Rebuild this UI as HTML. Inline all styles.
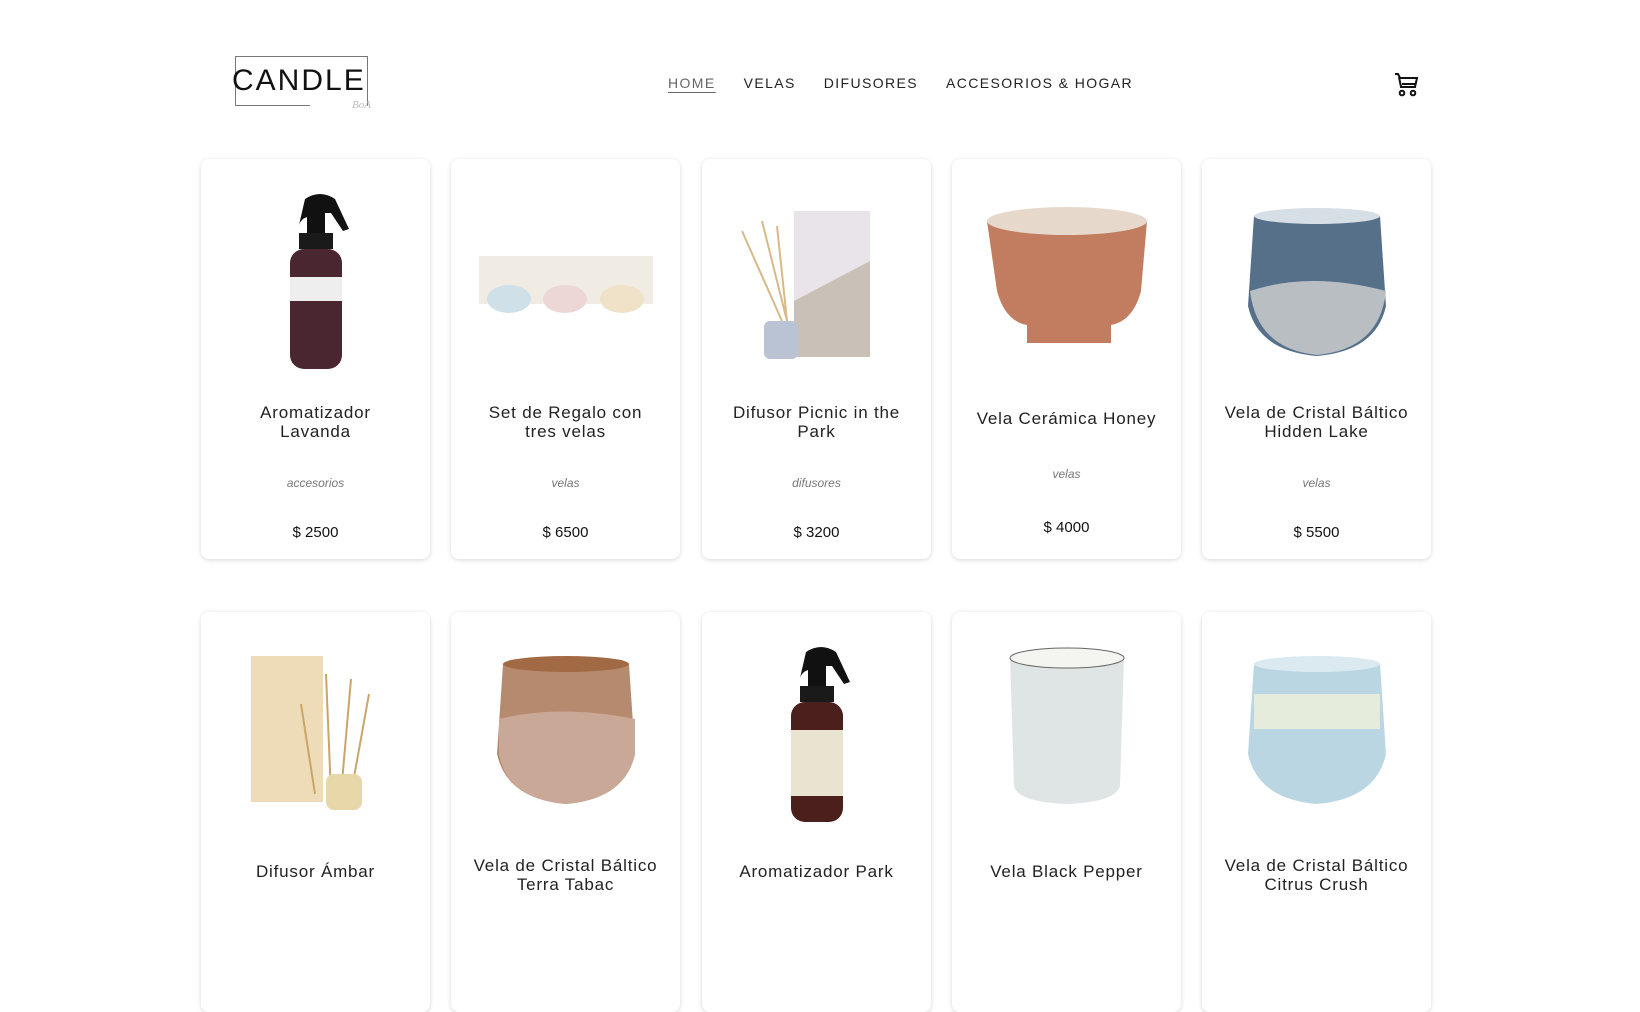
<!DOCTYPE html>
<html><head><meta charset="utf-8"><style>
*{margin:0;padding:0;box-sizing:border-box}
body{width:1640px;height:907px;overflow:hidden;background:#fff;font-family:"Liberation Sans",sans-serif;color:#222;position:relative}
.logo{position:absolute;left:235px;top:56px;width:133px;height:50px;border:1.5px solid #777;border-bottom:none}
.logo:after{content:"";position:absolute;left:-1.5px;bottom:0;width:75px;border-bottom:1.5px solid #777}
.logo b{position:absolute;left:-4px;top:7px;font-weight:normal;font-size:30px;letter-spacing:2px;color:#111;line-height:34px}
.logo i{position:absolute;left:116px;top:42px;font-size:11px;color:#bbb;font-family:"Liberation Serif",serif}
nav{position:absolute;top:75px;left:668px;font-size:14px;letter-spacing:1.4px;color:#222}
nav span{margin-right:28px}
nav span:first-child{color:#666;text-decoration:underline;text-underline-offset:4px}
.cart{position:absolute;left:1394px;top:72px}
.card{position:absolute;width:229px;height:400px;background:#fff;border-radius:8px;box-shadow:0 1px 5px rgba(0,0,0,.16)}
.card svg{position:absolute;left:0;top:22px}
.t{position:absolute;top:244px;left:0;right:0;text-align:center;font-size:17px;letter-spacing:.8px;line-height:19px;color:#222;white-space:nowrap}
.t.one{top:250px}
.c{position:absolute;top:317px;width:100%;text-align:center;font-size:12px;font-style:italic;color:#777}
.p{position:absolute;top:365px;width:100%;text-align:center;font-size:15px;color:#111}
</style></head><body>
<div class="logo"><b>CANDLE</b><i>BoA</i></div>
<nav><span>HOME</span><span>VELAS</span><span>DIFUSORES</span><span>ACCESORIOS &amp; HOGAR</span></nav>
<svg class="cart" width="26" height="26" viewBox="0 0 26 26" fill="none" stroke="#111" stroke-width="2"><path d="M1 2h3l2 4h17l-2 9H7L5 5M8 12h14"/><circle cx="8" cy="21" r="2.3"/><circle cx="19" cy="21" r="2.3"/></svg>

<div class="card" style="left:201px;top:159px"><svg width="229" height="200"><path d="M104 18q15-10 30 0l14 30-6 2-12-18h-6v20h-18v-16q-6 2-8 8z" fill="#111"/><rect x="98" y="52" width="34" height="16" fill="#1a1a1a"/><rect x="89" y="68" width="52" height="120" rx="14" fill="#4a2730"/><rect x="89" y="96" width="52" height="24" fill="#eee"/></svg><div class="t">Aromatizador<br>Lavanda</div><div class="c">accesorios</div><div class="p">$ 2500</div></div>
<div class="card" style="left:451px;top:159px"><svg width="229" height="200"><rect x="28" y="75" width="174" height="48" fill="#f0ece4"/><ellipse cx="58" cy="118" rx="22" ry="14" fill="#cfe0e8"/><ellipse cx="114" cy="118" rx="22" ry="14" fill="#ecd6d6"/><ellipse cx="171" cy="118" rx="22" ry="14" fill="#efe2c8"/></svg><div class="t">Set de Regalo con<br>tres velas</div><div class="c">velas</div><div class="p">$ 6500</div></div>
<div class="card" style="left:702px;top:159px"><svg width="229" height="200"><rect x="92" y="30" width="76" height="146" fill="#e9e4ea"/><path d="M92 120l76-40v96H92z" fill="#c9c0b8"/><path d="M40 50l40 90M60 40l25 100M75 45l10 95" stroke="#d8b98a" stroke-width="2"/><rect x="62" y="140" width="34" height="38" rx="6" fill="#b9c3d4"/></svg><div class="t">Difusor Picnic in the<br>Park</div><div class="c">difusores</div><div class="p">$ 3200</div></div>
<div class="card" style="left:952px;top:159px"><svg width="229" height="200"><path d="M35 40h160l-6 70q-8 30-30 34v18h-84v-18q-22-4-30-34z" fill="#c27c60"/><ellipse cx="115" cy="40" rx="80" ry="14" fill="#e6d9cc"/></svg><div class="t one">Vela Cerámica Honey</div><div class="c" style="top:308px">velas</div><div class="p" style="top:360px">$ 4000</div></div>
<div class="card" style="left:1202px;top:159px"><svg width="229" height="200"><path d="M52 35h126l6 90q-10 45-69 50q-59-5-69-50z" fill="#57708a"/><path d="M48 110q60-20 136 0q-6 58-69 64q-60-6-67-64z" fill="#b8bec2"/><ellipse cx="115" cy="35" rx="63" ry="8" fill="#d6dee6"/></svg><div class="t">Vela de Cristal Báltico<br>Hidden Lake</div><div class="c">velas</div><div class="p">$ 5500</div></div>

<div class="card" style="left:201px;top:612px"><svg width="229" height="200"><rect x="50" y="22" width="72" height="146" fill="#eedcb8"/><path d="M100 70l14 90M125 40l5 120M150 45l-10 115M168 60l-18 100" stroke="#c9a56a" stroke-width="2"/><rect x="125" y="140" width="36" height="36" rx="8" fill="#e8d7a8"/></svg><div class="t one">Difusor Ámbar</div></div>
<div class="card" style="left:451px;top:612px"><svg width="229" height="200"><path d="M52 30h126l6 90q-10 45-69 50q-59-5-69-50z" fill="#b68a6e"/><path d="M48 85q60-15 136 0l0 35q-10 45-69 50q-59-5-67-50z" fill="#c9a898"/><ellipse cx="115" cy="30" rx="63" ry="8" fill="#a26a44"/></svg><div class="t">Vela de Cristal Báltico<br>Terra Tabac</div></div>
<div class="card" style="left:702px;top:612px"><svg width="229" height="200"><path d="M104 18q15-10 30 0l14 30-6 2-12-18h-6v20h-18v-16q-6 2-8 8z" fill="#111"/><rect x="98" y="52" width="34" height="16" fill="#1a1a1a"/><rect x="89" y="68" width="52" height="120" rx="14" fill="#4a1f1c"/><rect x="89" y="96" width="52" height="66" fill="#e9e4cf"/></svg><div class="t one">Aromatizador Park</div></div>
<div class="card" style="left:952px;top:612px"><svg width="229" height="200"><path d="M58 22h114l-4 130q-4 16-53 18q-49-2-53-18z" fill="#dfe4e4"/><ellipse cx="115" cy="24" rx="57" ry="10" fill="#f4f4f0" stroke="#666"/></svg><div class="t one">Vela Black Pepper</div></div>
<div class="card" style="left:1202px;top:612px"><svg width="229" height="200"><path d="M52 30h126l6 90q-10 45-69 50q-59-5-69-50z" fill="#b9d6e2"/><path d="M52 60h126v35H52z" fill="#e6ecdc"/><ellipse cx="115" cy="30" rx="63" ry="8" fill="#dbeaf0"/></svg><div class="t">Vela de Cristal Báltico<br>Citrus Crush</div></div>
</body></html>
